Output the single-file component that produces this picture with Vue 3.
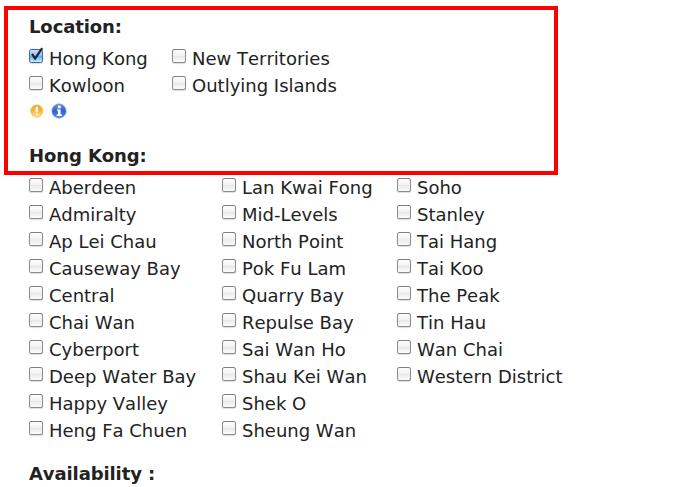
<template>
  <main class="filters">
    <section class="group location">
      <h3 class="title">Location:</h3>
      <div class="columns">
        <ul v-for="(column, ci) in locations" :key="ci" :class="['column', `loc-${ci + 1}`]">
          <li v-for="item in column" :key="item.name">
            <label class="option">
              <input v-model="item.checked" type="checkbox" />
              <span class="box">
                <svg v-if="item.checked" class="tick" viewBox="0 0 17 17">
                  <path d="M4 6.8 7.1 11.6 14.2 1.2" />
                </svg>
              </span>
              <span class="name">{{ item.name }}</span>
            </label>
          </li>
        </ul>
      </div>
      <div class="hints">
        <svg class="hint" viewBox="0 0 16 16">
          <defs>
            <linearGradient id="amber" x1="0" y1="0" x2="0" y2="1">
              <stop offset="0" stop-color="#f0a02c" />
              <stop offset="0.5" stop-color="#fbb63c" />
              <stop offset="1" stop-color="#ffe79a" />
            </linearGradient>
          </defs>
          <circle cx="7.8" cy="8" r="6.1" fill="url(#amber)" stroke="#f5b455" stroke-width="0.8" />
          <path d="M7.8 4.6v3.8" stroke="#fff" stroke-width="2.2" stroke-linecap="round" />
          <circle cx="7.8" cy="11.3" r="1.1" fill="#fff" />
        </svg>
        <svg class="hint" viewBox="0 0 16 16">
          <defs>
            <linearGradient id="blue" x1="0" y1="0" x2="0" y2="1">
              <stop offset="0" stop-color="#6b97e0" />
              <stop offset="0.5" stop-color="#2d62c6" />
              <stop offset="1" stop-color="#5790e6" />
            </linearGradient>
          </defs>
          <circle cx="8" cy="8" r="7.2" fill="url(#blue)" stroke="#7ea4e0" stroke-width="0.6" />
          <circle cx="8.2" cy="3.9" r="1.6" fill="#fff" />
          <path d="M5.8 6.5h3.8v5.1h1.2v1.3H5.7v-1.3h1.2V7.8H5.8z" fill="#fff" />
        </svg>
      </div>
    </section>

    <section class="group">
      <h3 class="title">Hong Kong:</h3>
      <div class="columns">
        <ul v-for="(column, ci) in districts" :key="ci" :class="['column', `area-${ci + 1}`]">
          <li v-for="item in column" :key="item.name">
            <label class="option">
              <input v-model="item.checked" type="checkbox" />
              <span class="box">
                <svg v-if="item.checked" class="tick" viewBox="0 0 17 17">
                  <path d="M4 6.8 7.1 11.6 14.2 1.2" />
                </svg>
              </span>
              <span class="name">{{ item.name }}</span>
            </label>
          </li>
        </ul>
      </div>
    </section>

    <section class="group availability">
      <h3 class="title">Availability :</h3>
    </section>

    <div class="highlight"></div>
  </main>
</template>

<script setup>
import { reactive } from 'vue'

const toOptions = (names, selected = []) =>
  names.map((name) => ({ name, checked: selected.includes(name) }))

const locations = reactive([
  toOptions(['Hong Kong', 'Kowloon'], ['Hong Kong']),
  toOptions(['New Territories', 'Outlying Islands'])
])

const districts = reactive([
  toOptions([
    'Aberdeen', 'Admiralty', 'Ap Lei Chau', 'Causeway Bay', 'Central',
    'Chai Wan', 'Cyberport', 'Deep Water Bay', 'Happy Valley', 'Heng Fa Chuen'
  ]),
  toOptions([
    'Lan Kwai Fong', 'Mid-Levels', 'North Point', 'Pok Fu Lam', 'Quarry Bay',
    'Repulse Bay', 'Sai Wan Ho', 'Shau Kei Wan', 'Shek O', 'Sheung Wan'
  ]),
  toOptions([
    'Soho', 'Stanley', 'Tai Hang', 'Tai Koo', 'The Peak',
    'Tin Hau', 'Wan Chai', 'Western District'
  ])
])
</script>

<style>
body { margin: 0; background: #fff; }
</style>

<style scoped>
.filters {
  position: relative;
  box-sizing: border-box;
  height: 487px;
  padding: 13px 0 0 29px;
  overflow: hidden;
  background: #fff;
  color: #222;
  font: 18px/27px Verdana, "DejaVu Sans", sans-serif;
  font-kerning: none;
}
.title { margin: 0 0 5px; font-size: 18px; font-weight: 700; line-height: 27px; letter-spacing: -0.1px; }
.location { height: 129px; }
.availability { margin-top: 16px; }

.columns { display: flex; }
.column { flex: none; list-style: none; margin: 0; padding: 0; }
.loc-1 { width: 143px; }
.area-1 { width: 193px; }
.area-2 { width: 175px; }

.option { display: flex; align-items: flex-start; height: 27px; white-space: nowrap; }
.option input { position: absolute; opacity: 0; pointer-events: none; }
.box {
  position: relative;
  flex: none;
  box-sizing: border-box;
  width: 14px;
  height: 14px;
  margin: 4px 6px 0 0;
  border: 1px solid #8c8c8c;
  border-top-color: #808080;
  border-radius: 2.5px;
  background: linear-gradient(#fdfdfd, #f3f3f3 45%, #e9e9e9 52%, #fcfcfc);
  box-shadow: 0 1px 1px rgba(0, 0, 0, 0.14);
}
input:checked + .box {
  border-color: #4a6591;
  background: linear-gradient(#c9e0f6, #8cc0ef 48%, #67afec 54%, #b9f2ff);
}
.tick { position: absolute; left: -2px; top: -3px; width: 17px; height: 17px; }
.tick path { fill: none; stroke: #1b2434; stroke-width: 2.2; }

.hints { display: flex; gap: 6px; padding-top: 4px; }
.hint { display: block; width: 16px; height: 16px; }

/* Red marker frame drawn over the form */
.highlight {
  position: absolute;
  left: 4px;
  top: 6px;
  box-sizing: border-box;
  width: 554px;
  height: 169px;
  border: 4px solid #f00;
  pointer-events: none;
}
</style>
